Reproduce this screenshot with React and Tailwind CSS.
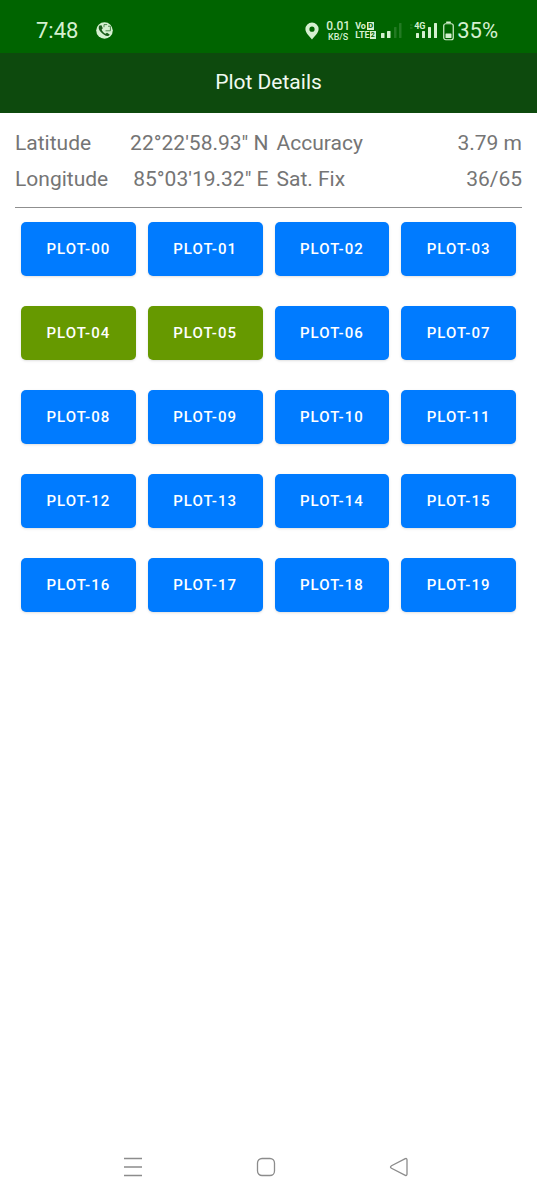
import React from "react";

const donePlots = [4, 5];

const plots = Array.from({ length: 20 }, (_, i) => ({
  id: i,
  label: `PLOT-${String(i).padStart(2, "0")}`,
  done: donePlots.includes(i),
}));

const StatusBar = () => {
  return (
    <div className="flex h-[53px] items-center justify-between bg-[#006400] pt-2 pr-[39px] pl-9 text-[#d5f0d0]">
      {/* Clock and call icon */}
      <div className="flex items-center gap-[18px]">
        <span className="text-[22px] leading-6">7:48</span>
        <svg width="17" height="17" viewBox="0 0 17 17">
          <circle cx="8.5" cy="8.5" r="8.3" fill="#d5f0d0" />
          <path
            d="M3.4 3.4c-1.200 1.500-.9 4.200 1.400 6.700s4.800 4.200 7.200 3.900c.9-.1 1.500-.7 1.700-1.400l-2.700-1.800-1.600 1C7.600 10.900 6 9 5.700 7.500l1.100-1.300L5.500 3.200z"
            fill="#1a5c1a"
          />
          <path
            d="M8 5.200V2.600h3.200M12 4.200l2.400 0v4.600H9.500"
            fill="none"
            stroke="#3f7f3f"
            strokeWidth="0.9"
          />
        </svg>
      </div>

      {/* Network, signal and battery */}
      <div className="flex items-center">
        <svg width="14" height="18" viewBox="0 0 14 18" className="mr-[6px]">
          <path
            fillRule="evenodd"
            fill="#d5f0d0"
            d="M7 0.500a6.600 6.600 0 0 0-6.600 6.600c0 3.900 4.100 7.500 6.600 10.400 2.500-2.900 6.600-6.500 6.600-10.400A6.600 6.600 0 0 0 7 .5zm0 4.100a2.600 2.600 0 1 1 0 5.200 2.600 2.600 0 0 1 0-5.200z"
          />
        </svg>
        <div className="mr-1 flex w-[26px] flex-col items-center font-medium">
          <span className="text-xs leading-3">0.01</span>
          <span className="text-[9px] leading-[10px]">KB/S</span>
        </div>
        <div className="mr-[7px] flex w-[19px] flex-col text-[9px] leading-[9px] font-bold">
          <span className="flex items-center justify-between">
            Vo
            <span className="bg-[#d5f0d0] px-px text-[8px] leading-[8px] text-[#006400]">
              D
            </span>
          </span>
          <span className="flex items-center justify-between">
            LTE
            <span className="bg-[#d5f0d0] px-px text-[7px] leading-[8px] text-[#006400]">
              2
            </span>
          </span>
        </div>
        <svg width="21" height="15" viewBox="0 0 21 15" className="mr-[8px]">
          <rect x="0" y="10" width="3.500" height="5" rx="0.500" fill="#d5f0d0" />
          <rect x="6" y="8" width="3.500" height="7" rx="0.500" fill="#d5f0d0" />
          <rect x="13" y="4" width="2.500" height="11" rx="0.500" fill="#237a23" />
          <rect x="18" y="0" width="2.500" height="15" rx="0.500" fill="#237a23" />
        </svg>
        <div className="relative mr-[5px] h-[17px] w-[28px]">
          <svg width="28" height="17" viewBox="0 0 28 17">
            <path d="M0 3h2.500M0 6h2.500" stroke="#2c802c" strokeWidth="1" />
            <rect x="6" y="11" width="3" height="5" rx="0.500" fill="#d5f0d0" />
            <rect x="12" y="9" width="3" height="7" rx="0.500" fill="#d5f0d0" />
            <rect x="18" y="5" width="3" height="11" rx="0.500" fill="#d5f0d0" />
            <rect x="24" y="1" width="3" height="15" rx="0.500" fill="#d5f0d0" />
          </svg>
          <span className="absolute top-0 left-1 text-[9px] leading-[9px] font-bold">
            4G
          </span>
        </div>
        <svg width="11" height="20" viewBox="0 0 11 20" className="mr-[3px]">
          <rect x="3" y="0.500" width="5" height="1.500" rx="0.700" fill="#d5f0d0" />
          <rect
            x="0.750"
            y="2.750"
            width="9.500"
            height="16"
            rx="2"
            fill="none"
            stroke="#d5f0d0"
            strokeWidth="1.200"
          />
          <rect x="2.500" y="12.500" width="6" height="4.500" rx="0.600" fill="#d5f0d0" />
        </svg>
        <span className="text-[22px] leading-6">35%</span>
      </div>
    </div>
  );
};

const InfoRow = ({ label, value }) => (
  <div className="flex justify-between leading-9 even:pl-2">
    <dt>{label}</dt>
    <dd>{value}</dd>
  </div>
);

const NavBar = () => {
  return (
    <nav className="flex items-center pr-[72px] pb-[23px] pl-[66px]">
      <button type="button" aria-label="Recent apps" className="flex flex-1 justify-center">
        <svg width="20" height="20" viewBox="0 0 20 20" stroke="#8c8c8c" strokeWidth="1.300">
          <path d="M1 1.500h18M1 10h18M1 18.500h18" />
        </svg>
      </button>
      <button type="button" aria-label="Home" className="flex flex-1 justify-center">
        <svg width="20" height="20" viewBox="0 0 20 20" fill="none" stroke="#8c8c8c" strokeWidth="1.300">
          <rect x="1.500" y="1.500" width="17" height="17" rx="4.500" />
        </svg>
      </button>
      <button type="button" aria-label="Back" className="flex flex-1 justify-center">
        <svg width="20" height="20" viewBox="0 0 20 20" fill="none" stroke="#8c8c8c" strokeWidth="1.300">
          <path d="M16.300 1.700 2.500 8.700q-2 1.300 0 2.600l13.800 7q1.700.7 1.700-1.300V3q0-2-1.700-1.300z" />
        </svg>
      </button>
    </nav>
  );
};

const App = () => {
  return (
    <div className="flex min-h-screen flex-col bg-white font-[Roboto,sans-serif]">
      <StatusBar />

      <header className="flex h-[60px] items-center justify-center bg-[#0d4a0d]">
        <h1 className="text-[21px] text-[#f0faf0]">Plot Details</h1>
      </header>

      <main className="flex-1 px-[15px] pt-3">
        {/* GPS info */}
        <dl className="grid grid-cols-2 border-b border-[#8f8f8f] pb-[10px] text-[21px] text-[#757575]">
          <InfoRow label="Latitude" value={`22°22'58.93" N`} />
          <InfoRow label="Accuracy" value="3.79 m" />
          <InfoRow label="Longitude" value={`85°03'19.32" E`} />
          <InfoRow label="Sat. Fix" value="36/65" />
        </dl>

        {/* Plots */}
        <div className="grid grid-cols-4 gap-x-3 gap-y-[30px] px-[6px] pt-[14px]">
          {plots.map((plot) => (
            <button
              key={plot.id}
              type="button"
              className={`h-[54px] rounded-[5px] text-[15px] font-medium tracking-[1px] text-white shadow-sm ${
                plot.done ? "bg-[#669900]" : "bg-[#007bff]"
              }`}
            >
              {plot.label}
            </button>
          ))}
        </div>
      </main>

      <NavBar />
    </div>
  );
};

export default App;
